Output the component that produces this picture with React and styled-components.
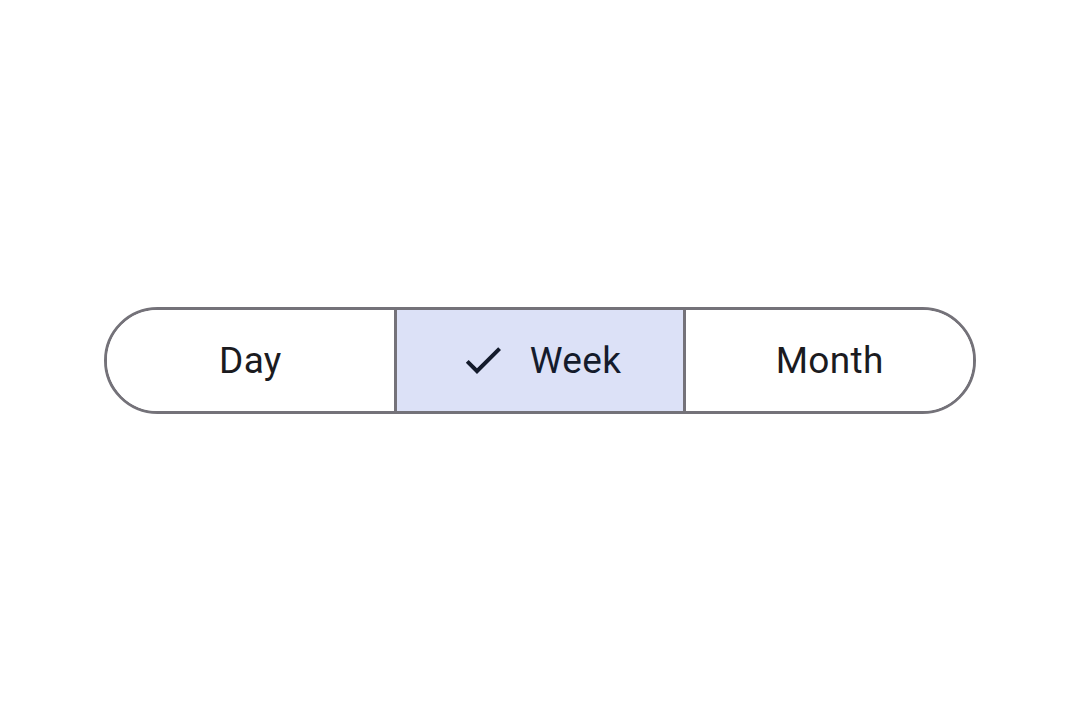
import React, { useState } from 'react';
import styled, { createGlobalStyle } from 'styled-components';

const GlobalStyle = createGlobalStyle`
  html, body {
    margin: 0;
    padding: 0;
    background: #ffffff;
  }
  body {
    font-family: Roboto, "Liberation Sans", sans-serif;
  }
`;

const options = ['Day', 'Week', 'Month'];

export default function App() {
  const [selected, setSelected] = useState('Week');
  return (
    <Page>
      <GlobalStyle />
      <SegmentGroup>
        {options.map((option) => (
          <Segment
            key={option}
            $active={selected === option}
            onClick={() => setSelected(option)}
          >
            {selected === option && (
              <CheckIcon viewBox='0 0 24 24'>
                <path d='M9 16.17L4.83 12l-1.42 1.41L9 19 21 7l-1.41-1.41z' />
              </CheckIcon>
            )}
            <Label>{option}</Label>
          </Segment>
        ))}
      </SegmentGroup>
    </Page>
  );
}

const Page = styled.div`
  width: 100vw;
  height: 100vh;
  display: flex;
  align-items: center;
  justify-content: center;
`;

const SegmentGroup = styled.div`
  width: 872px;
  height: 107px;
  box-sizing: border-box;
  display: flex;
  border: 3px solid #747279;
  border-radius: 54px;
  overflow: hidden;
`;

const Segment = styled.button`
  flex: 1;
  display: flex;
  align-items: center;
  justify-content: center;
  gap: 23px;
  margin: 0;
  padding: 0;
  border: none;
  border-left: 3px solid #747279;
  background: ${(p) => (p.$active ? '#dce1f7' : '#ffffff')};
  color: ${(p) => (p.$active ? '#141b2c' : '#1b1b1f')};
  font-family: Roboto, "Liberation Sans", sans-serif;
  cursor: pointer;

  &:first-child {
    border-left: none;
  }
`;

const Label = styled.span`
  font-size: 37px;
  font-weight: 400;
  letter-spacing: 0.3px;
`;

const CheckIcon = styled.svg`
  width: 48px;
  height: 48px;
  fill: currentColor;
`;
